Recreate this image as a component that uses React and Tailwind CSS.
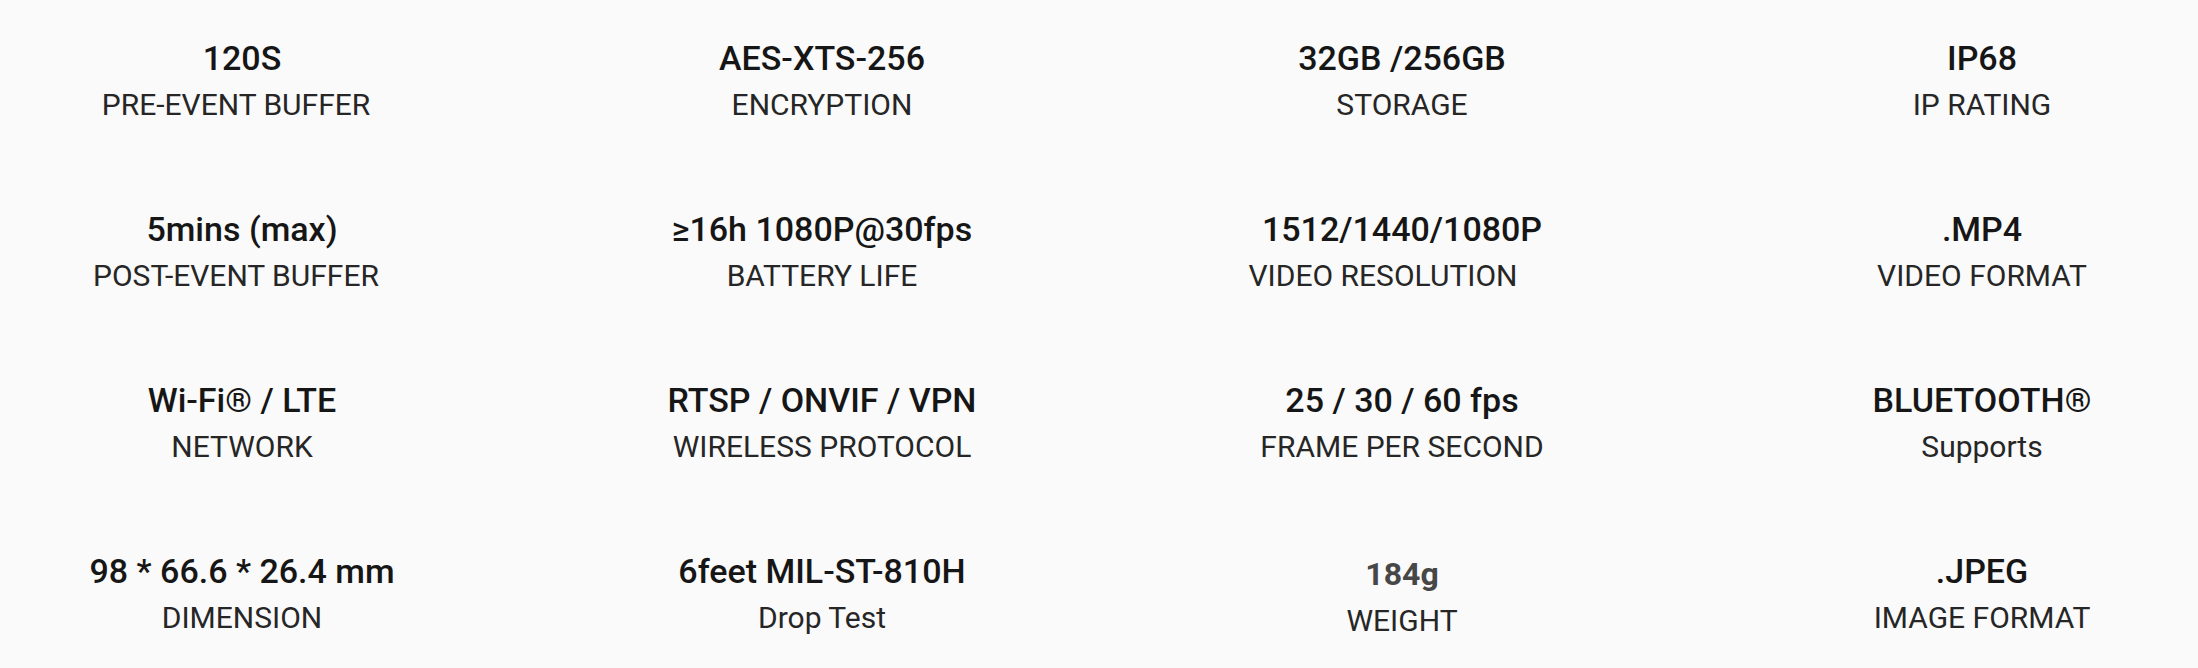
import React from "react";

const specs = [
  { t: "120S", s: "PRE-EVENT BUFFER", subPad: "pr-[12px]" },
  { t: "AES-XTS-256", s: "ENCRYPTION" },
  { t: "32GB /256GB", s: "STORAGE" },
  { t: "IP68", s: "IP RATING" },
  { t: "5mins (max)", s: "POST-EVENT BUFFER", subPad: "pr-[12px]" },
  { t: "≥16h 1080P@30fps", s: "BATTERY LIFE" },
  { t: "1512/1440/1080P", s: "VIDEO RESOLUTION", subPad: "pr-[38px]" },
  { t: ".MP4", s: "VIDEO FORMAT" },
  { t: "Wi-Fi® / LTE", s: "NETWORK" },
  { t: "RTSP / ONVIF / VPN", s: "WIRELESS PROTOCOL" },
  { t: "25 / 30 / 60 fps", s: "FRAME PER SECOND" },
  { t: "BLUETOOTH®", s: "Supports" },
  { t: "98 * 66.6 * 26.4 mm", s: "DIMENSION" },
  { t: "6feet MIL-ST-810H", s: "Drop Test" },
  { t: "184g", s: "WEIGHT", weight: true },
  { t: ".JPEG", s: "IMAGE FORMAT" },
];

function Spec({ t, s, weight, subPad }) {
  return (
    <div className={"flex flex-col items-center text-center " + (weight ? "pt-[3px]" : "")}>
      {weight ? (
        <div className="text-[32px] leading-[44px] font-bold text-[#474747] whitespace-nowrap">{t}</div>
      ) : (
        <div className="text-[34px] leading-[44px] font-medium text-[#161616] whitespace-nowrap">{t}</div>
      )}
      <div
        className={
          "text-[30px] leading-[50px] font-normal text-[#262626] whitespace-nowrap " + (subPad || "")
        }
      >
        {s}
      </div>
    </div>
  );
}

export default function App() {
  return (
    <div
      className="w-[2198px] h-[668px] bg-[#fafafa] pt-[36px] pl-[32px] overflow-hidden"
      style={{ fontFamily: "Roboto, 'Noto Sans', sans-serif" }}
    >
      <div className="grid grid-cols-[repeat(4,420px)] gap-x-[160px] gap-y-[77px]">
        {specs.map((x, i) => (
          <Spec key={i} {...x} />
        ))}
      </div>
    </div>
  );
}
